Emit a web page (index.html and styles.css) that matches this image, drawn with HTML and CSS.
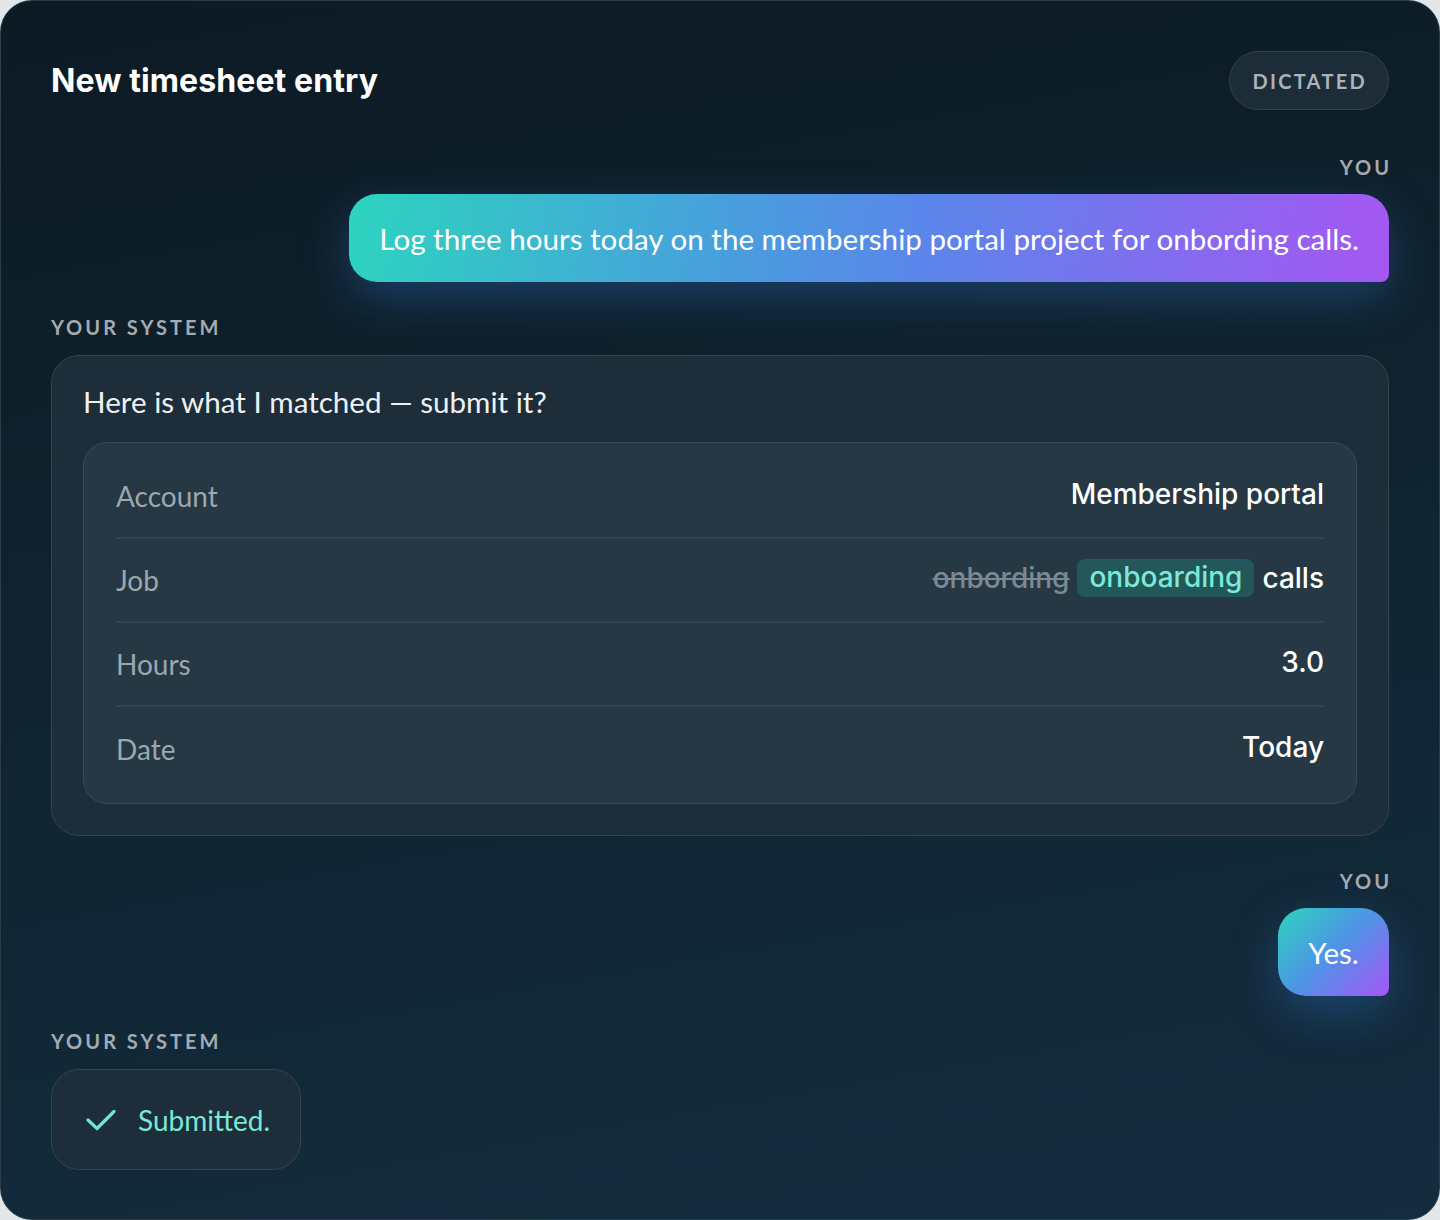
FILE: index.html
```html
<!DOCTYPE html>
<html lang="en">
<head>
  <meta charset="UTF-8">
  <meta name="viewport" content="width=device-width, initial-scale=1.0">
  <title>New timesheet entry</title>
  <link rel="stylesheet" href="styles.css">
</head>
<body>
  <div class="panel">
    <header class="panel-head">
      <h1 class="title">New timesheet entry</h1>
      <span class="pill">DICTATED</span>
    </header>

    <div class="msg msg-user">
      <div class="who">YOU</div>
      <div class="bubble">Log three hours today on the membership portal project for onbording calls.</div>
    </div>

    <div class="msg msg-system">
      <div class="who">YOUR SYSTEM</div>
      <div class="card">
        <p class="card-lead">Here is what I matched — submit it?</p>
        <div class="fields">
          <div class="field">
            <span class="field-label">Account</span>
            <span class="field-value">Membership portal</span>
          </div>
          <div class="field">
            <span class="field-label">Job</span>
            <span class="field-value">
              <s class="typo">onbording</s>
              <span class="fix">onboarding</span>
              calls
            </span>
          </div>
          <div class="field">
            <span class="field-label">Hours</span>
            <span class="field-value">3.0</span>
          </div>
          <div class="field">
            <span class="field-label">Date</span>
            <span class="field-value">Today</span>
          </div>
        </div>
      </div>
    </div>

    <div class="msg msg-user">
      <div class="who">YOU</div>
      <div class="bubble bubble-short">Yes.</div>
    </div>

    <div class="msg msg-system">
      <div class="who">YOUR SYSTEM</div>
      <div class="card card-done">
        <svg class="check" width="30" height="22" viewBox="0 0 30 22" fill="none">
          <polyline points="2,11 11,19.5 28,2.5" stroke="currentColor" stroke-width="3.2" stroke-linecap="round" stroke-linejoin="round"/>
        </svg>
        <span>Submitted.</span>
      </div>
    </div>
  </div>
</body>
</html>
```

FILE: styles.css
```css
html, body {
  margin: 0;
  background: #e4e7ea;
}
body {
  font-family: Lato, "Open Sans", sans-serif;
  color: #fff;
}
.panel {
  box-sizing: border-box;
  height: 1220px;
  padding: 50px 50px 0;
  border: 1px solid #2c3d4a;
  border-radius: 32px;
  background: linear-gradient(170deg, #0c1a24 0%, #10232f 45%, #132d3f 100%);
  overflow: hidden;
}
.panel-head {
  display: flex;
  justify-content: space-between;
  align-items: center;
}
.title {
  margin: 0;
  font-family: Inter, Lato, sans-serif;
  font-size: 32px;
  font-weight: 700;
  letter-spacing: 0.1px;
}
.pill {
  box-sizing: border-box;
  height: 59px;
  padding: 0 21px 0 22px;
  display: flex;
  align-items: center;
  border: 1.5px solid #33434f;
  border-radius: 30px;
  background: #1c2c38;
  color: #aab3ba;
  font-size: 20px;
  font-weight: 700;
  letter-spacing: 2.3px;
}

.msg {
  display: flex;
  flex-direction: column;
}
.msg-user {
  align-items: flex-end;
  margin-top: 46px;
}
.msg-system {
  align-items: flex-start;
  margin-top: 36px;
}
.msg-user + .msg-system {
  margin-top: 34px;
}
.msg-system + .msg-user {
  margin-top: 34px;
}
.who {
  font-size: 20px;
  font-weight: 700;
  line-height: 22px;
  letter-spacing: 3px;
  color: #a3abb2;
  margin-bottom: 16px;
}
.msg-system .who {
  margin-bottom: 17px;
}
.msg-user .who {
  margin-right: -3px;
}

.bubble {
  box-sizing: border-box;
  height: 88px;
  display: flex;
  align-items: center;
  padding: 0 30px;
  border-radius: 28px 28px 8px 28px;
  background: linear-gradient(100deg, #2dd4bf 0%, #47a1dc 35%, #5a86ea 55%, #a656f3 100%);
  box-shadow: 0 16px 46px rgba(48, 120, 210, 0.35);
  font-size: 29.6px;
}
.bubble-short {
  width: 111px;
  justify-content: center;
  padding: 0;
  background: linear-gradient(135deg, #2dd4bf 0%, #4f93e6 50%, #a855f7 100%);
}

.card {
  box-sizing: border-box;
  border: 1.5px solid #33444f;
  border-radius: 28px;
  background: #1d2d3a;
}
.msg-system .card:not(.card-done) {
  align-self: stretch;
  padding: 28px 31px 31px;
}
.card-lead {
  margin: 0 0 22px;
  font-size: 29.6px;
  line-height: 36px;
  color: #eef1f3;
}
.fields {
  border: 1.5px solid #37495a;
  border-radius: 24px;
  background: #253843;
  padding: 12px 32px;
}
.field {
  box-sizing: border-box;
  height: 84px;
  display: flex;
  justify-content: space-between;
  align-items: center;
  border-bottom: 2px solid #31434f;
}
.field:last-child {
  border-bottom: none;
}
.field-label {
  font-size: 28px;
  color: #9ca7af;
}
.field-value {
  font-family: Inter, Lato, sans-serif;
  font-size: 28px;
  font-weight: 500;
  color: #fff;
  display: flex;
  align-items: center;
  gap: 8px;
  margin-top: -4px;
}
.typo {
  color: #7c8992;
  font-weight: 500;
}
.fix {
  background: #23585a;
  color: #7de9d6;
  border-radius: 8px;
  padding: 1px 12px 3px;
}

.card-done {
  height: 101px;
  display: flex;
  align-items: center;
  gap: 22px;
  padding: 0 30px 0 34px;
  color: #7ae8d5;
  font-size: 28px;
}
.check {
  color: #6fe6d1;
}
```
